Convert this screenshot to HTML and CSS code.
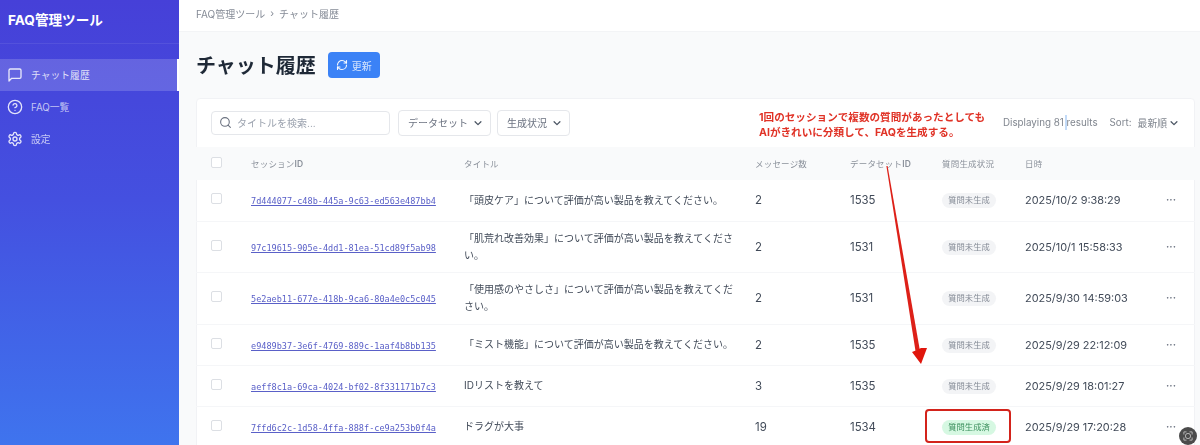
FILE: index.html
```html
<!DOCTYPE html>
<html lang="ja">
<head>
<meta charset="utf-8">
<title>チャット履歴</title>
<link rel="stylesheet" href="styles.css">
</head>
<body>
<div class="app">
  <aside class="sidebar">
    <div class="brand">FAQ管理ツール</div>
    <nav class="nav">
      <a class="nav-item active">
        <svg class="nav-icon" viewBox="0 0 24 24"><path d="M21 15a2 2 0 0 1-2 2H7l-4 4V5a2 2 0 0 1 2-2h14a2 2 0 0 1 2 2z"/></svg>
        <span>チャット履歴</span>
      </a>
      <a class="nav-item">
        <svg class="nav-icon" viewBox="0 0 24 24"><circle cx="12" cy="12" r="10"/><path d="M9.090 9a3 3 0 0 1 5.830 1c0 2-3 3-3 3"/><path d="M12 17h.01"/></svg>
        <span>FAQ一覧</span>
      </a>
      <a class="nav-item">
        <svg class="nav-icon" viewBox="0 0 24 24"><path d="M12.220 2h-.44a2 2 0 0 0-2 2v.18a2 2 0 0 1-1 1.730l-.43.25a2 2 0 0 1-2 0l-.15-.08a2 2 0 0 0-2.730.73l-.22.38a2 2 0 0 0 .73 2.730l.15.1a2 2 0 0 1 1 1.720v.51a2 2 0 0 1-1 1.740l-.15.09a2 2 0 0 0-.73 2.730l.22.38a2 2 0 0 0 2.730.73l.15-.08a2 2 0 0 1 2 0l.43.25a2 2 0 0 1 1 1.730V20a2 2 0 0 0 2 2h.44a2 2 0 0 0 2-2v-.18a2 2 0 0 1 1-1.730l.43-.25a2 2 0 0 1 2 0l.15.08a2 2 0 0 0 2.730-.73l.22-.39a2 2 0 0 0-.73-2.730l-.15-.08a2 2 0 0 1-1-1.740v-.5a2 2 0 0 1 1-1.740l.15-.09a2 2 0 0 0 .73-2.730l-.22-.38a2 2 0 0 0-2.730-.73l-.15.08a2 2 0 0 1-2 0l-.43-.25a2 2 0 0 1-1-1.730V4a2 2 0 0 0-2-2z"/><circle cx="12" cy="12" r="3"/></svg>
        <span>設定</span>
      </a>
    </nav>
  </aside>
  <main class="main">
    <div class="crumbs"><span>FAQ管理ツール</span><span class="sep">›</span><span>チャット履歴</span></div>
    <div class="content">
      <div class="page-head">
        <h1>チャット履歴</h1>
        <button class="refresh">
          <svg class="refresh-icon" viewBox="0 0 24 24"><path d="M3 12a9 9 0 0 1 9-9 9.750 9.750 0 0 1 6.740 2.740L21 8"/><path d="M21 3v5h-5"/><path d="M21 12a9 9 0 0 1-9 9 9.750 9.750 0 0 1-6.740-2.740L3 16"/><path d="M8 16H3v5"/></svg>
          <span>更新</span>
        </button>
      </div>
      <section class="card">
        <div class="toolbar">
          <div class="search">
            <svg class="search-icon" viewBox="0 0 24 24"><circle cx="11" cy="11" r="8"/><path d="m21 21-4.300-4.300"/></svg>
            <span>タイトルを検索...</span>
          </div>
          <div class="select"><span>データセット</span><svg class="chev" viewBox="0 0 12 12"><path d="M2.500 4.500 6 8l3.500-3.500"/></svg></div>
          <div class="select"><span>生成状況</span><svg class="chev" viewBox="0 0 12 12"><path d="M2.500 4.500 6 8l3.500-3.500"/></svg></div>
          <div class="summary">
            <span>Displaying 81 results</span>
            <span class="sort">Sort:</span>
            <span class="sort-val">最新順</span>
            <svg class="chev" viewBox="0 0 12 12"><path d="M2.500 4.500 6 8l3.500-3.500"/></svg>
          </div>
        </div>
        <table class="table">
          <colgroup>
            <col class="c-check"><col class="c-id"><col class="c-title"><col class="c-msg"><col class="c-ds"><col class="c-st"><col class="c-date"><col class="c-more">
          </colgroup>
          <thead>
            <tr><th><i class="box"></i></th><th>セッション<b>ID</b></th><th>タイトル</th><th>メッセージ数</th><th>データセット<b>ID</b></th><th>質問生成状況</th><th>日時</th><th></th></tr>
          </thead>
          <tbody>
            <tr class="r1"><td><i class="box"></i></td><td><a class="sid">7d444077-c48b-445a-9c63-ed563e487bb4</a></td><td class="ttl">「頭皮ケア」について評価が高い製品を教えてください。</td><td>2</td><td>1535</td><td><span class="pill">質問未生成</span></td><td class="date">2025/10/2 9:38:29</td><td class="more">···</td></tr>
            <tr class="r2"><td><i class="box"></i></td><td><a class="sid">97c19615-905e-4dd1-81ea-51cd89f5ab98</a></td><td class="ttl">「肌荒れ改善効果」について評価が高い製品を教えてください。</td><td>2</td><td>1531</td><td><span class="pill">質問未生成</span></td><td class="date">2025/10/1 15:58:33</td><td class="more">···</td></tr>
            <tr class="r3"><td><i class="box"></i></td><td><a class="sid">5e2aeb11-677e-418b-9ca6-80a4e0c5c045</a></td><td class="ttl">「使用感のやさしさ」について評価が高い製品を教えてください。</td><td>2</td><td>1531</td><td><span class="pill">質問未生成</span></td><td class="date">2025/9/30 14:59:03</td><td class="more">···</td></tr>
            <tr class="r1"><td><i class="box"></i></td><td><a class="sid">e9489b37-3e6f-4769-889c-1aaf4b8bb135</a></td><td class="ttl">「ミスト機能」について評価が高い製品を教えてください。</td><td>2</td><td>1535</td><td><span class="pill">質問未生成</span></td><td class="date">2025/9/29 22:12:09</td><td class="more">···</td></tr>
            <tr class="r1"><td><i class="box"></i></td><td><a class="sid">aeff8c1a-69ca-4024-bf02-8f331171b7c3</a></td><td class="ttl">IDリストを教えて</td><td>3</td><td>1535</td><td><span class="pill">質問未生成</span></td><td class="date">2025/9/29 18:01:27</td><td class="more">···</td></tr>
            <tr class="r1"><td><i class="box"></i></td><td><a class="sid">7ffd6c2c-1d58-4ffa-888f-ce9a253b0f4a</a></td><td class="ttl">ドラグが大事</td><td>19</td><td>1534</td><td><span class="pill done">質問生成済</span></td><td class="date">2025/9/29 17:20:28</td><td class="more">···</td></tr>
          </tbody>
        </table>
      </section>
    </div>
  </main>
</div>
<div class="note">1回のセッションで複数の質問があったとしても<br>AIがきれいに分類して、FAQを生成する。</div>
<svg class="arrow" viewBox="0 0 1200 445"><path class="arrow-shaft" d="M886.400 166h1.200L919.800 350l-4.300 1z"/><path class="arrow-head" d="M912 352 917 350 921 348 927 348 921 364z"/></svg>
<div class="highlight"></div>
<div class="cursor-bar"></div>
<div class="fab"><svg viewBox="0 0 16 16"><circle cx="8" cy="8" r="3.500"/><path d="M2.500 6V2.500H6M10 2.500h3.500V6M13.500 10v3.500H10M6 13.500H2.500V10"/></svg></div>
</body>
</html>
```
FILE: styles.css
```css
* { box-sizing: border-box; }
html, body { margin: 0; height: 445px; overflow: hidden; }
body {
  font-family: Inter, "Noto Sans CJK JP", sans-serif;
  color: #374151;
  background: #f9fafb;
  position: relative;
  filter: blur(0.4px);
}
.app { display: flex; height: 445px; }

.sidebar {
  width: 179px;
  flex: none;
  background: linear-gradient(180deg, #4640d8 0%, #4450e0 45%, #3f74ee 100%);
  color: #fff;
}
.brand {
  height: 44px;
  padding: 9px 0 0 8px;
  font-size: 13.600px;
  font-weight: 700;
  line-height: 22px;
  border-bottom: 1px solid rgba(255,255,255,.08);
}
.nav { padding-top: 15px; display: flex; flex-direction: column; }
.nav-item {
  height: 32px;
  display: flex;
  align-items: center;
  gap: 8px;
  padding-left: 7px;
  font-size: 9.800px;
  color: rgba(255,255,255,.7);
}
.nav-item.active {
  background: rgba(255,255,255,.17);
  border-right: 2px solid #fff;
  color: rgba(255,255,255,.82);
}
.nav-icon { width: 16px; height: 16px; fill: none; stroke: rgba(255,255,255,.85); stroke-width: 2; stroke-linejoin: round; stroke-linecap: round; }

.main { flex: 1; min-width: 0; }
.crumbs {
  height: 32px;
  background: #fff;
  display: flex;
  align-items: center;
  gap: 5px;
  padding: 0 0 5px 17px;
  font-size: 10px;
  color: #858b96;
  border-bottom: 1px solid #f3f4f6;
}
.content { padding: 0 0 0 17px; }
.page-head { height: 66px; display: flex; align-items: center; gap: 12px; }
h1 { margin: 0; padding-top: 1px; font-size: 20px; font-weight: 700; line-height: 28px; color: #1f2937; }
.refresh {
  width: 52px;
  height: 26px;
  border: 0;
  border-radius: 4px;
  background: #3b82f6;
  color: rgba(255,255,255,.8);
  font: inherit;
  font-size: 10px;
  display: flex;
  align-items: center;
  justify-content: center;
  gap: 4px;
  padding: 0;
}
.refresh-icon { width: 12px; height: 12px; fill: none; stroke: rgba(255,255,255,.95); stroke-width: 2.200; stroke-linecap: round; stroke-linejoin: round; }

.card {
  width: 999px;
  background: #fff;
  border: 1px solid #f1f2f5;
  border-radius: 4px;
  height: 360px;
}
.toolbar { height: 48px; display: flex; align-items: center; padding: 0 15px 1px 14px; gap: 6px; font-size: 10px; color: #6b7280; }
.search {
  width: 179px;
  height: 24px;
  margin-right: 2px;
  border: 1px solid #e5e7eb;
  border-radius: 4px;
  display: flex;
  align-items: center;
  gap: 5px;
  padding-left: 7px;
  color: #9ca3af;
}
.search-icon { width: 13px; height: 13px; fill: none; stroke: #6b7280; stroke-width: 2; stroke-linecap: round; }
.select {
  height: 26px;
  border: 1px solid #e5e7eb;
  border-radius: 4px;
  display: flex;
  align-items: center;
  gap: 5px;
  padding: 0 8px 0 9px;
}
.select .chev { margin-right: -1px; }
.chev { width: 10px; height: 10px; fill: none; stroke: #4b5563; stroke-width: 1.500; stroke-linecap: round; stroke-linejoin: round; }
.summary { margin-left: auto; display: flex; align-items: center; font-size: 9.800px; color: #80868f; }
.sort { margin-left: 12px; }
.sort-val { margin-left: 6px; margin-right: 2px; }

.table { width: 999px; margin-left: -1px; border-collapse: collapse; table-layout: fixed; }
.c-check { width: 55px; } .c-id { width: 213px; } .c-title { width: 291px; }
.c-msg { width: 95px; } .c-ds { width: 92px; } .c-st { width: 83px; }
.c-date { width: 135px; } .c-more { width: 35px; }
thead tr { height: 33px; background: #f9fafb; }
th { text-align: left; font-weight: 400; font-size: 8.500px; color: #8b919b; padding: 0 0 2px; letter-spacing: .2px; }
th b { font-weight: 600; }
th:first-child, td:first-child { padding-left: 15px; }
td { padding: 0; font-size: 11.400px; color: #414a58; border-bottom: 1px solid #f5f6f8; }
.r1 { height: 41px; }
.r2 { height: 51px; }
.r3 { height: 52px; }
.box { display: block; width: 11px; height: 11px; border: 1px solid #dcdfe4; border-radius: 2px; background: #fff; margin-bottom: 3px; }
th .box { margin-bottom: 0; }
.sid {
  font-family: "DejaVu Sans Mono", monospace;
  font-size: 8.540px;
  color: #5a60c8;
  text-decoration: underline;
}
.ttl { font-size: 10px; line-height: 17px; padding-right: 20px; }
.pill {
  display: inline-block;
  width: 54px;
  height: 15px;
  border-radius: 8px;
  background: #f3f4f6;
  color: #858b96;
  font-size: 8.300px;
  line-height: 15px;
  text-align: center;
}
.pill.done { background: #d6f8e2; color: #3b8f5c; }
.date { font-size: 10.900px; }
.more { color: #6b7280; font-weight: 700; font-size: 10px; padding-left: 6px; padding-bottom: 2px; }

.note {
  position: absolute;
  left: 759px;
  top: 111px;
  font-size: 10.600px;
  line-height: 14.500px;
  font-weight: 700;
  color: #e03226;
  white-space: nowrap;
}
.arrow { position: absolute; left: 0; top: 0; width: 1200px; height: 445px; pointer-events: none; }
.arrow-shaft { fill: #dd2018; }
.arrow-head { fill: #e0150c; }
.highlight {
  position: absolute;
  left: 925px;
  top: 409px;
  width: 86px;
  height: 34px;
  border: 2.500px solid #d3231b;
  border-radius: 4px;
}
.cursor-bar { position: absolute; left: 1065px; top: 115px; width: 2px; height: 15px; background: #c3dbf8; }
.fab {
  position: absolute;
  left: 1179px;
  top: 427px;
  width: 18px;
  height: 18px;
  border-radius: 50%;
  background: #4b4b4b;
  display: flex;
  align-items: center;
  justify-content: center;
}
.fab svg { width: 12px; height: 12px; fill: none; stroke: #bdbdbd; stroke-width: 1.200; }
```
